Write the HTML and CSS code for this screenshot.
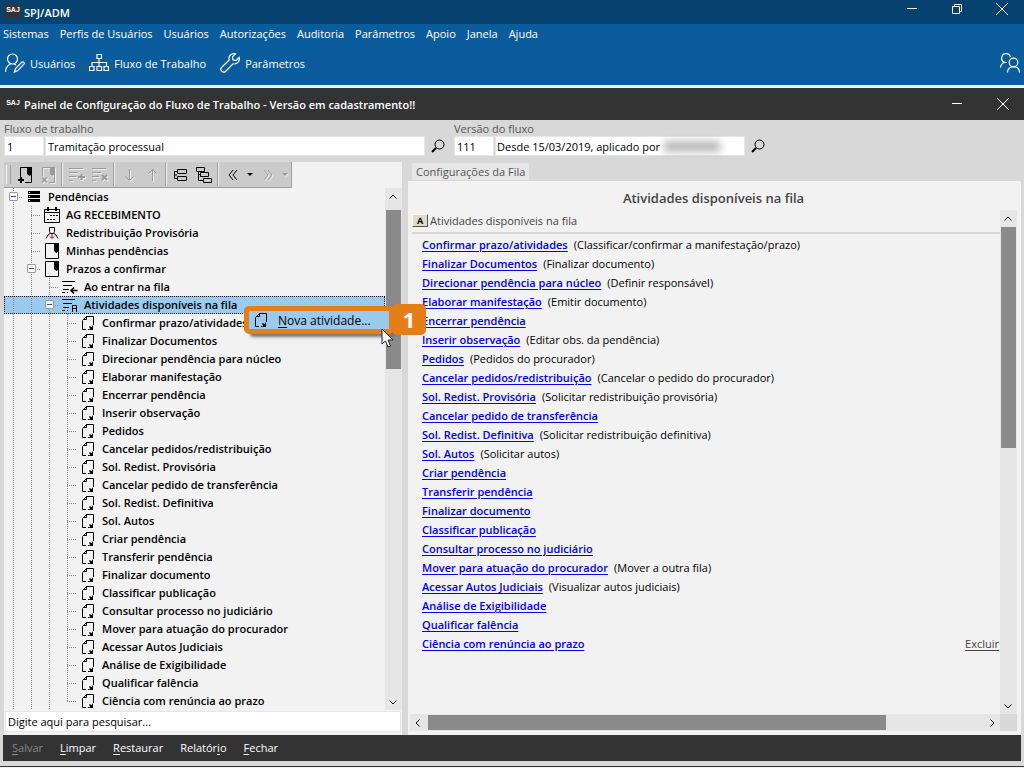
FILE: index.html
```html
<!DOCTYPE html>
<html lang="pt-BR">
<head>
  <meta charset="UTF-8" />
  <meta name="viewport" content="width=device-width, initial-scale=1.0" />
  <title>SPJ/ADM</title>
  <link rel="stylesheet" href="styles.css">
</head>
<body>
  <svg class="sprite" aria-hidden="true">
    <symbol id="i-close" viewBox="0 0 14 14"><path d="M1 1l12 12M13 1L1 13" /></symbol>
    <symbol id="i-min" viewBox="0 0 14 14"><path d="M2 6.500h10" /></symbol>
    <symbol id="i-search" viewBox="0 0 14 14"><circle cx="8.500" cy="5.500" r="4.500" /><path d="M5 9l-4 4" stroke-width="2" /></symbol>
    <symbol id="i-queue" viewBox="0 0 16 18"><path d="M1.500 1.500h13v15h-13z" /><path d="M10 1h5v8l-2.500 2L10 9z" fill="#000" stroke="none" /></symbol>
    <symbol id="i-act" viewBox="0 0 14 16"><path d="M5 1.500h7.500V10M5.500 1v3.500H2M5 2L1.500 5.500v9H5M7 14.500h1" /><path d="M12 10v5H7.500l1.800-1.500-1.300-1.500 1-1 1.500 1.200z" fill="#000" stroke="none" /></symbol>
    <symbol id="i-up" viewBox="0 0 10 10"><path d="M1.500 6.500L5 3l3.500 3.500" /></symbol>
    <symbol id="i-down" viewBox="0 0 10 10"><path d="M1.500 3.500L5 7l3.500-3.500" /></symbol>
    <symbol id="i-left" viewBox="0 0 10 10"><path d="M6.500 1.500L3 5l3.500 3.500" /></symbol>
    <symbol id="i-right" viewBox="0 0 10 10"><path d="M3.500 1.500L7 5 3.500 8.500" /></symbol>
  </svg>

  <header class="titlebar app-title">
    <span class="logo">SAJ</span>
    <h1>SPJ/ADM</h1>
    <div class="window-btns">
      <button aria-label="Minimizar"><svg width="14" height="14"><use href="#i-min" /></svg></button>
      <button aria-label="Restaurar janela"><svg width="12" height="12" viewBox="0 0 12 12"><path d="M1.500 3.500h7v7h-7zM3.500 3V1.500h7v7H9" /></svg></button>
      <button aria-label="Fechar janela"><svg width="14" height="14"><use href="#i-close" /></svg></button>
    </div>
  </header>

  <div class="ribbon">
    <nav class="menu">
      <a href="#">Sistemas</a>
      <a href="#">Perfis de Usuários</a>
      <a href="#">Usuários</a>
      <a href="#">Autorizações</a>
      <a href="#">Auditoria</a>
      <a href="#">Parâmetros</a>
      <a href="#">Apoio</a>
      <a href="#">Janela</a>
      <a href="#">Ajuda</a>
    </nav>
    <div class="shortcuts">
      <button><svg width="20" height="20" viewBox="0 0 20 20"><circle cx="7.500" cy="6" r="5" /><path d="M.5 19c0-4 2-6.500 5-8M9 11l2 1M9.500 19l1-3.500L17 9c1.500-.8 2.800.8 2 2.200l-6.500 6.600z" /></svg>Usuários</button>
      <button><svg width="20" height="18" viewBox="0 0 20 18"><path d="M8 .5h4.500v4H8zM10 4.500v7.500M3 12V8.500h14.500V12M.5 12.500h4.500v4H.5zM8 12.500h4.500v4H8zM15 12.500h4.500v4H15z" /></svg>Fluxo de Trabalho</button>
      <button><svg width="20" height="20" viewBox="0 0 20 20"><path d="M15.500.8c-4-1-7.500 2.200-6.300 6.200L1.500 14.500c-2.200 2.500 1.500 6 4 4l7.500-7.700c4 1 7.200-2.500 6.200-6.300L16 7.500l-3-.6-.5-3z" /></svg>Parâmetros</button>
      <button class="session" aria-label="Sessão"><svg width="20" height="20" viewBox="0 0 20 20"><path d="M5 9.500a4.500 4.500 0 1 1 5.500-5.500M.5 14.500c0-2 1.500-4 3.500-5h3" /><circle cx="13.500" cy="9.500" r="4.300" /><path d="M7.500 19.500c0-3 2-5.500 4.500-5.500h3c2.500 0 4.500 2.500 4.500 5.500" /></svg></button>
    </div>
  </div>

  <section class="panel-window">
    <header class="titlebar panel-title">
      <span class="logo">SAJ</span>
      <h2>Painel de Configuração do Fluxo de Trabalho - Versão em cadastramento!!</h2>
      <div class="window-btns">
        <button aria-label="Minimizar painel"><svg width="14" height="14"><use href="#i-min" /></svg></button>
        <button aria-label="Fechar painel"><svg width="14" height="14"><use href="#i-close" /></svg></button>
      </div>
    </header>

    <form class="filters">
      <div class="field">
        <label for="fluxo">Fluxo de trabalho</label>
        <div class="inputs">
          <input class="code" id="fluxo" type="text" value="1" />
          <input class="flow-name" type="text" value="Tramitação processual" aria-label="Nome do fluxo" />
          <button type="button" class="lookup" aria-label="Pesquisar fluxo"><svg width="14" height="14"><use href="#i-search" /></svg></button>
        </div>
      </div>
      <div class="field">
        <label for="versao">Versão do fluxo</label>
        <div class="inputs">
          <input class="code" id="versao" type="text" value="111" />
          <div class="version-box">
            <input type="text" value="Desde 15/03/2019, aplicado por" aria-label="Descrição da versão" />
            <span class="hidden-user"></span>
          </div>
          <button type="button" class="lookup" aria-label="Pesquisar versão"><svg width="14" height="14"><use href="#i-search" /></svg></button>
        </div>
      </div>
    </form>

    <main class="columns">
      <div class="left">
        <div class="toolbar">
          <button aria-label="Incluir fila"><svg width="16" height="18" viewBox="0 0 16 18"><path d="M3.500 11V1.500h11v15H8" /><path d="M10 1h5v7l-2.500 2L10 8z" fill="#000" stroke="none" /><path d="M1 14h6M4 11v6" stroke-width="2" /></svg></button>
          <button disabled aria-label="Excluir fila"><svg width="16" height="18" viewBox="0 0 16 18"><path d="M2.500 10V1.500h12v15H9" /><path d="M10 1h5v7l-2.500 2L10 8z" fill="#999" stroke="none" /><path d="M2 11.500l5 5M7 11.500l-5 5" stroke-width="1.500" /></svg></button>
          <span class="sep"></span>
          <button disabled aria-label="Incluir atividade"><svg width="18" height="16" viewBox="0 0 18 16"><path d="M1 1.500h14M1 5.500h9M1 9.500h7M1 13.500h4" /><path d="M10 10h7M13.500 7v6" stroke-width="2" /></svg></button>
          <button disabled aria-label="Excluir atividade"><svg width="18" height="16" viewBox="0 0 18 16"><path d="M1 1.500h14M1 5.500h9M1 9.500h7M1 13.500h4" /><path d="M11 8l5 5M16 8l-5 5" stroke-width="2" /></svg></button>
          <span class="sep"></span>
          <button disabled aria-label="Descer"><svg width="10" height="14" viewBox="0 0 10 14"><path d="M5.500 1v11M1.500 8.500l4 4 4-4" /></svg></button>
          <button disabled aria-label="Subir"><svg width="10" height="14" viewBox="0 0 10 14"><path d="M5.500 13V2M1.500 5.500l4-4 4 4" /></svg></button>
          <span class="sep"></span>
          <button aria-label="Recolher"><svg width="14" height="14" viewBox="0 0 14 14"><path d="M3.500 1.500h9v4h-9zM3.500 8.500h9v4h-9zM3 3.500H.5v7H3M.5 7H3" /></svg></button>
          <button aria-label="Expandir"><svg width="16" height="16" viewBox="0 0 16 16"><path d="M.5.500h8v4h-8zM4.500 5.500h8v4h-8zM7.500 11.500h8v4h-8zM2.500 5v8.500H7M2.500 7.500h2" /></svg></button>
          <span class="sep"></span>
          <button aria-label="Voltar"><svg width="10" height="12" viewBox="0 0 10 12"><path d="M5 1L1 6l4 5M9 1L5 6l4 5" /></svg></button>
          <button class="drop" aria-label="Histórico anterior"></button>
          <button disabled aria-label="Avançar"><svg width="10" height="12" viewBox="0 0 10 12"><path d="M1 1l4 5-4 5M5 1l4 5-4 5" /></svg></button>
          <button disabled class="drop" aria-label="Histórico seguinte"></button>
        </div>

        <div class="tree-area">
          <ul class="tree">
            <li class="lv0"><span class="branch"><button class="toggle" aria-label="Recolher Pendências"></button></span><span class="icon"><svg width="12" height="12" viewBox="0 0 12 12"><path d="M0 0h12v3H0zM0 4h12v3H0zM0 8h12v3H0z" fill="#000" stroke="none" /><path d="M1 1.500h1M1 5.500h1M1 9.500h1" stroke="#fff" /></svg></span>Pendências</li>
            <li class="lv1"><span class="branch"></span><span class="icon"><svg width="16" height="16" viewBox="0 0 16 16"><path d="M.5 2.500h15v13H.5zM.5 5.500h15" /><path d="M4 0v4M12 0v4" stroke-width="2" /><path d="M6 8.500h2M9 8.500h2M12 8.500h2M3 12.500h2M6 12.500h2M9 12.500h2" /></svg></span>AG RECEBIMENTO</li>
            <li class="lv1"><span class="branch"></span><span class="icon"><svg width="14" height="14" viewBox="0 0 14 14"><path d="M4.500 1.500h5v4L8.500 7.500h-3l-1-2zM5 7.500L3 9l-2 3.500M9 7.500L11 9l2 3.500" /><path d="M7 8v4M5 10.500l2 2 2-2" stroke="#c00000" /></svg></span>Redistribuição Provisória</li>
            <li class="lv1"><span class="branch"></span><span class="icon"><svg width="16" height="18"><use href="#i-queue" /></svg></span>Minhas pendências</li>
            <li class="lv1"><span class="branch"><button class="toggle" aria-label="Recolher Prazos a confirmar"></button></span><span class="icon"><svg width="16" height="18"><use href="#i-queue" /></svg></span>Prazos a confirmar</li>
            <li class="lv2"><span class="branch"></span><span class="icon"><svg width="16" height="14" viewBox="0 0 16 14"><path d="M0 1.500h13M1 5.500h9M1 9.500h6M0 12.500h3M5 12.500h1" /><path d="M15.500 10.500H10M12 7.500l-3 3 3 3" stroke-width="1.500" /></svg></span>Ao entrar na fila</li>
            <li class="lv2 selected"><span class="branch"><button class="toggle" aria-label="Recolher Atividades"></button></span><span class="icon"><svg width="16" height="14" viewBox="0 0 16 14"><path d="M0 1.500h13M1 5.500h9M1 9.500h6M0 12.500h3M5 12.500h1" /><path d="M10.500 14V7.500h4V14M10 10.500h5" /></svg></span>Atividades disponíveis na fila</li>
            <li class="lv3"><span class="branch"></span><span class="icon"><svg width="14" height="16"><use href="#i-act" /></svg></span>Confirmar prazo/atividades</li>
            <li class="lv3"><span class="branch"></span><span class="icon"><svg width="14" height="16"><use href="#i-act" /></svg></span>Finalizar Documentos</li>
            <li class="lv3"><span class="branch"></span><span class="icon"><svg width="14" height="16"><use href="#i-act" /></svg></span>Direcionar pendência para núcleo</li>
            <li class="lv3"><span class="branch"></span><span class="icon"><svg width="14" height="16"><use href="#i-act" /></svg></span>Elaborar manifestação</li>
            <li class="lv3"><span class="branch"></span><span class="icon"><svg width="14" height="16"><use href="#i-act" /></svg></span>Encerrar pendência</li>
            <li class="lv3"><span class="branch"></span><span class="icon"><svg width="14" height="16"><use href="#i-act" /></svg></span>Inserir observação</li>
            <li class="lv3"><span class="branch"></span><span class="icon"><svg width="14" height="16"><use href="#i-act" /></svg></span>Pedidos</li>
            <li class="lv3"><span class="branch"></span><span class="icon"><svg width="14" height="16"><use href="#i-act" /></svg></span>Cancelar pedidos/redistribuição</li>
            <li class="lv3"><span class="branch"></span><span class="icon"><svg width="14" height="16"><use href="#i-act" /></svg></span>Sol. Redist. Provisória</li>
            <li class="lv3"><span class="branch"></span><span class="icon"><svg width="14" height="16"><use href="#i-act" /></svg></span>Cancelar pedido de transferência</li>
            <li class="lv3"><span class="branch"></span><span class="icon"><svg width="14" height="16"><use href="#i-act" /></svg></span>Sol. Redist. Definitiva</li>
            <li class="lv3"><span class="branch"></span><span class="icon"><svg width="14" height="16"><use href="#i-act" /></svg></span>Sol. Autos</li>
            <li class="lv3"><span class="branch"></span><span class="icon"><svg width="14" height="16"><use href="#i-act" /></svg></span>Criar pendência</li>
            <li class="lv3"><span class="branch"></span><span class="icon"><svg width="14" height="16"><use href="#i-act" /></svg></span>Transferir pendência</li>
            <li class="lv3"><span class="branch"></span><span class="icon"><svg width="14" height="16"><use href="#i-act" /></svg></span>Finalizar documento</li>
            <li class="lv3"><span class="branch"></span><span class="icon"><svg width="14" height="16"><use href="#i-act" /></svg></span>Classificar publicação</li>
            <li class="lv3"><span class="branch"></span><span class="icon"><svg width="14" height="16"><use href="#i-act" /></svg></span>Consultar processo no judiciário</li>
            <li class="lv3"><span class="branch"></span><span class="icon"><svg width="14" height="16"><use href="#i-act" /></svg></span>Mover para atuação do procurador</li>
            <li class="lv3"><span class="branch"></span><span class="icon"><svg width="14" height="16"><use href="#i-act" /></svg></span>Acessar Autos Judiciais</li>
            <li class="lv3"><span class="branch"></span><span class="icon"><svg width="14" height="16"><use href="#i-act" /></svg></span>Análise de Exigibilidade</li>
            <li class="lv3"><span class="branch"></span><span class="icon"><svg width="14" height="16"><use href="#i-act" /></svg></span>Qualificar falência</li>
            <li class="lv3 last"><span class="branch"></span><span class="icon"><svg width="14" height="16"><use href="#i-act" /></svg></span>Ciência com renúncia ao prazo</li>
          </ul>
          <div class="scroll-v tree-scroll">
            <button aria-label="Rolar árvore para cima"><svg width="10" height="10"><use href="#i-up" /></svg></button>
            <div class="track"><div class="thumb"></div></div>
            <button aria-label="Rolar árvore para baixo"><svg width="10" height="10"><use href="#i-down" /></svg></button>
          </div>

          <div class="context-menu">
            <button class="context-item"><svg width="14" height="16"><use href="#i-act" /></svg><span><u>N</u>ova atividade...</span></button>
            <span class="step">1</span>
            <svg class="cursor" width="13" height="20" viewBox="0 0 13 20"><path d="M1 1v15l3.500-3 2.500 6 2.500-1-2.500-6H12z" fill="#fff" stroke="#223" /></svg>
          </div>
        </div>

        <input class="tree-search" type="text" value="Digite aqui para pesquisar..." aria-label="Pesquisar" />
      </div>

      <div class="right">
        <button class="tab">Configurações da Fila</button>
        <div class="tab-panel">
          <h3>Atividades disponíveis na fila</h3>
          <div class="list-area">
            <div class="list-body">
              <div class="list-head"><span class="a-box">A</span>Atividades disponíveis na fila</div>
              <ul class="activities">
                <li><a href="#">Confirmar prazo/atividades</a><span>(Classificar/confirmar a manifestação/prazo)</span></li>
                <li><a href="#">Finalizar Documentos</a><span>(Finalizar documento)</span></li>
                <li><a href="#">Direcionar pendência para núcleo</a><span>(Definir responsável)</span></li>
                <li><a href="#">Elaborar manifestação</a><span>(Emitir documento)</span></li>
                <li><a href="#">Encerrar pendência</a></li>
                <li><a href="#">Inserir observação</a><span>(Editar obs. da pendência)</span></li>
                <li><a href="#">Pedidos</a><span>(Pedidos do procurador)</span></li>
                <li><a href="#">Cancelar pedidos/redistribuição</a><span>(Cancelar o pedido do procurador)</span></li>
                <li><a href="#">Sol. Redist. Provisória</a><span>(Solicitar redistribuição provisória)</span></li>
                <li><a href="#">Cancelar pedido de transferência</a></li>
                <li><a href="#">Sol. Redist. Definitiva</a><span>(Solicitar redistribuição definitiva)</span></li>
                <li><a href="#">Sol. Autos</a><span>(Solicitar autos)</span></li>
                <li><a href="#">Criar pendência</a></li>
                <li><a href="#">Transferir pendência</a></li>
                <li><a href="#">Finalizar documento</a></li>
                <li><a href="#">Classificar publicação</a></li>
                <li><a href="#">Consultar processo no judiciário</a></li>
                <li><a href="#">Mover para atuação do procurador</a><span>(Mover a outra fila)</span></li>
                <li><a href="#">Acessar Autos Judiciais</a><span>(Visualizar autos judiciais)</span></li>
                <li><a href="#">Análise de Exigibilidade</a></li>
                <li><a href="#">Qualificar falência</a></li>
                <li><a href="#">Ciência com renúncia ao prazo</a><a class="delete" href="#">Excluir</a></li>
              </ul>
            </div>
            <div class="scroll-v list-scroll">
              <button aria-label="Rolar lista para cima"><svg width="10" height="10"><use href="#i-up" /></svg></button>
              <div class="track"><div class="thumb"></div></div>
              <button aria-label="Rolar lista para baixo"><svg width="10" height="10"><use href="#i-down" /></svg></button>
            </div>
            <div class="scroll-h">
              <button aria-label="Rolar para a esquerda"><svg width="10" height="10"><use href="#i-left" /></svg></button>
              <div class="track"><div class="thumb"></div></div>
              <button aria-label="Rolar para a direita"><svg width="10" height="10"><use href="#i-right" /></svg></button>
            </div>
            <div class="corner"></div>
          </div>
        </div>
      </div>
    </main>

    <footer class="actions">
      <button disabled><u>S</u>alvar</button>
      <button><u>L</u>impar</button>
      <button><u>R</u>estaurar</button>
      <button>Relatór<u>i</u>o</button>
      <button><u>F</u>echar</button>
    </footer>
  </section>
</body>
</html>
```

FILE: styles.css
```css
:root {
  --navy: #05426f;
  --blue: #0b5c9c;
  --dark: #333333;
  --gray: #d8d8d8;
  --light: #f2f2f2;
  --thumb: #8a8a8a;
  --track: #e6e6e6;
  --select: #9bcaef;
  --orange: #e67e17;
  --dots-v: repeating-linear-gradient(#888 0 1px, transparent 1px 2px);
  --dots-h: repeating-linear-gradient(90deg, #888 0 1px, transparent 1px 2px);
}

* {
  box-sizing: border-box;
}

body {
  font-family: "Open Sans", "Noto Sans", sans-serif;
  font-size: 11px;
  color: #000;
  background: var(--light);
  margin: 0;
  height: 100vh;
  display: flex;
  flex-direction: column;
  overflow: hidden;
}

h1, h2, h3, ul {
  margin: 0;
  padding: 0;
}

ul {
  list-style: none;
}

button, input {
  font: inherit;
  color: inherit;
  border: none;
  background: none;
  padding: 0;
  margin: 0;
}

a {
  color: inherit;
  text-decoration: none;
}

svg {
  display: block;
  flex: none;
  fill: none;
  stroke: currentColor;
}

u {
  text-underline-offset: 2px;
}

.sprite {
  position: absolute;
  width: 0;
  height: 0;
}

/* title bars */
.titlebar {
  display: flex;
  align-items: center;
  color: white;
  padding: 0 8px 0 5px;
  flex: none;
}

.titlebar h1, .titlebar h2 {
  font-size: 11px;
  font-weight: 600;
}

.app-title {
  height: 24px;
  background: var(--navy);
}

.panel-title {
  height: 32px;
  background: var(--dark);
}

.logo {
  width: 16px;
  height: 14px;
  margin-right: 3px;
  background: var(--dark);
  font: bold 7px/12px "Liberation Sans", sans-serif;
  text-align: center;
}

.window-btns {
  display: flex;
  gap: 32px;
  margin-left: auto;
}

.app-title .window-btns {
  padding: 0 7px 6px 0;
}

.panel-title .window-btns {
  padding-right: 6px;
}

.app-title .logo {
  margin-bottom: 3px;
}

/* menu and shortcuts */
.ribbon {
  height: 61px;
  flex: none;
  background: var(--blue);
  color: white;
}

.menu {
  display: flex;
  gap: 11px;
  padding: 1px 3px;
  line-height: 18px;
}

.shortcuts {
  display: flex;
  gap: 14px;
  padding: 9px 4px 0 5px;
}

.shortcuts button {
  display: flex;
  align-items: center;
  gap: 5px;
  height: 20px;
}

.shortcuts svg {
  stroke-width: 1.2;
}

.shortcuts .session {
  margin-left: auto;
}

/* configuration panel */
.panel-window {
  margin-top: 3px;
  flex: 1;
  min-height: 0;
  display: flex;
  flex-direction: column;
  background: var(--gray);
  border-bottom: 1px solid var(--dark);
  margin-bottom: 1px;
}

.filters {
  display: flex;
  gap: 4px;
  padding: 2px 4px 6px;
}

.field label {
  display: block;
  line-height: 14px;
  color: #555;
}

.inputs {
  display: flex;
  gap: 1px;
  height: 20px;
}

.inputs input {
  height: 20px;
  background: white;
  border: 1px solid #e6e6e6;
  padding: 0 2px;
}

.inputs .code {
  width: 40px;
}

.inputs .flow-name {
  width: 380px;
}

.version-box {
  width: 250px;
  display: flex;
  align-items: center;
  background: white;
  border: 1px solid #e6e6e6;
}

.inputs .version-box input {
  width: 168px;
  height: 18px;
  padding: 0 1px;
  border: none;
}

.hidden-user {
  width: 56px;
  height: 9px;
  background: #aaa;
  filter: blur(4px);
}

.lookup {
  width: 24px;
  display: flex;
  justify-content: center;
  align-items: center;
}

.columns {
  flex: 1;
  min-height: 0;
  display: flex;
  padding: 0 3px 0 4px;
}

.left {
  width: 398px;
  display: flex;
  flex-direction: column;
  background: var(--light);
}

.toolbar {
  align-self: flex-start;
  display: flex;
  height: 26px;
  background: #cbcbcb;
  border: 1px solid #9f9f9f;
  border-width: 0 1px 1px 0;
}

.toolbar::before {
  content: "";
  width: 3px;
  margin: 3px 2px;
  border-left: 1px solid #f2f2f2;
  border-right: 1px solid #9f9f9f;
}

.toolbar button {
  width: 23px;
  display: flex;
  justify-content: center;
  align-items: center;
}

.toolbar button:disabled {
  color: #999;
  filter: drop-shadow(1px 1px 0 #eee);
}

.toolbar .drop {
  width: 12px;
}

.toolbar .drop::after {
  content: "";
  border: 3px solid transparent;
  border-top-color: currentColor;
  border-bottom: none;
}

.sep {
  width: 2px;
  margin: 1px 2px;
  background: #9f9f9f;
  border-right: 1px solid #eee;
}

.tree-area {
  position: relative;
  flex: 1;
  min-height: 0;
  display: flex;
}

.tree {
  flex: 1;
  overflow: hidden;
  font-weight: 600;
}

.tree li {
  display: flex;
  height: 18px;
  line-height: 18px;
  white-space: nowrap;
  background-repeat: no-repeat;
  background-size: 1px 100%;
}

.lv0 {
  background-image: var(--dots-v);
  background-position: 9px 0;
}

.lv1 {
  padding-left: 18px;
  background-image: var(--dots-v), var(--dots-v);
  background-position: 9px 0, 27px 0;
}

.lv2 {
  padding-left: 36px;
  background-image: var(--dots-v), var(--dots-v), var(--dots-v);
  background-position: 9px 0, 27px 0, 45px 0;
}

.lv3 {
  padding-left: 54px;
  background-image: var(--dots-v), var(--dots-v), var(--dots-v), var(--dots-v);
  background-position: 9px 0, 27px 0, 45px 0, 63px 0;
}

.tree .last {
  background-size: 1px 100%, 1px 100%, 1px 100%, 1px 50%;
}

.tree .selected {
  background-color: var(--select);
  outline: 1px dotted #000;
  outline-offset: -1px;
}

.branch {
  width: 20px;
  padding: 4px 0 0 5px;
  background: var(--dots-h) 9px 9px / 10px 1px no-repeat;
}

.toggle {
  display: flex;
  align-items: center;
  justify-content: center;
  width: 9px;
  height: 9px;
  border: 1px solid #999;
  border-radius: 1px;
  background: #f8f8f8;
}

.toggle::after {
  content: "";
  width: 5px;
  height: 1px;
  background: #3355aa;
}

.icon {
  width: 20px;
  margin-right: 4px;
  display: flex;
  align-items: center;
  justify-content: center;
}

/* scroll bars */
.scroll-v {
  width: 17px;
  display: flex;
  flex-direction: column;
  background: var(--track);
}

.scroll-v button, .scroll-h button {
  display: flex;
  align-items: center;
  justify-content: center;
  width: 16px;
  height: 17px;
}

.track {
  flex: 1;
}

.scroll-v .thumb {
  width: 15px;
  margin: 0 1px;
  background: var(--thumb);
}

.tree-scroll .track {
  padding-top: 5px;
}

.tree-scroll .thumb {
  height: 33%;
}

.list-scroll .thumb {
  height: 47%;
}

.scroll-h {
  display: flex;
  background: var(--track);
}

.scroll-h .thumb {
  width: 82%;
  height: 15px;
  margin: 1px 2px;
  background: var(--thumb);
}

.corner {
  background: var(--gray);
}

/* context menu over the tree */
.context-menu {
  position: absolute;
  left: 240px;
  top: 118px;
  width: 150px;
  height: 28px;
  background: var(--select);
  border: 5px solid var(--orange);
  border-radius: 5px;
  box-shadow: 4px 5px 3px -2px #777;
  z-index: 1;
}

.context-item {
  display: flex;
  align-items: center;
  gap: 10px;
  width: 100%;
  height: 18px;
  padding-left: 5px;
  font-size: 12px;
}

.step {
  position: absolute;
  left: 143px;
  top: -7px;
  width: 34px;
  height: 31px;
  border-radius: 5px;
  background: var(--orange);
  color: white;
  font-size: 22px;
  font-weight: 700;
  line-height: 31px;
  text-align: center;
}

.cursor {
  position: absolute;
  left: 132px;
  top: 17px;
}

.tree-search {
  height: 21px;
  margin: 1px 1px 3px;
  padding: 0 2px;
  background: white;
  border: 1px solid #e6e6e6;
}

/* queue settings */
.right {
  flex: 1;
  min-width: 0;
  display: flex;
  flex-direction: column;
  margin-left: 6px;
}

.tab {
  align-self: flex-start;
  height: 17px;
  margin: 1px 0 1px 4px;
  padding: 0 4px;
  line-height: 17px;
  background: #e6e6e6;
  color: #555;
}

.tab-panel {
  flex: 1;
  min-height: 0;
  display: flex;
  flex-direction: column;
  padding: 8px 4px 4px 2px;
  background: var(--light);
}

.tab-panel h3 {
  height: 21px;
  font-size: 13px;
  font-weight: 600;
  line-height: 18px;
  text-align: center;
  color: #444;
}

.list-area {
  flex: 1;
  min-height: 0;
  display: grid;
  grid-template-columns: 1fr 17px;
  grid-template-rows: 1fr 17px;
}

.list-body {
  overflow: hidden;
  padding-left: 2px;
}

.list-head {
  display: flex;
  align-items: center;
  gap: 2px;
  height: 24px;
  padding-bottom: 2px;
  color: #444;
  border-bottom: 2px solid var(--gray);
}

.a-box {
  width: 16px;
  height: 13px;
  background: #dedbcb;
  border: 1px solid #fff;
  border-right-color: #555;
  border-bottom-color: #555;
  color: #000;
  font-size: 9px;
  font-weight: 700;
  line-height: 11px;
  text-align: center;
}

.activities {
  padding: 1px 1px 0 10px;
}

.activities li {
  display: flex;
  gap: 6px;
  height: 19px;
  line-height: 19px;
  white-space: nowrap;
}

.activities a {
  color: #0000ee;
  font-weight: 600;
  text-decoration: underline;
  text-underline-offset: 2px;
}

.activities .delete {
  margin-left: auto;
  color: #444;
  font-weight: 400;
}

.actions {
  flex: none;
  display: flex;
  align-items: center;
  gap: 17px;
  height: 26px;
  margin: 0 3px 5px;
  padding: 0 9px 2px;
  background: var(--dark);
  color: white;
}

.actions button:disabled {
  color: #888;
}
```
